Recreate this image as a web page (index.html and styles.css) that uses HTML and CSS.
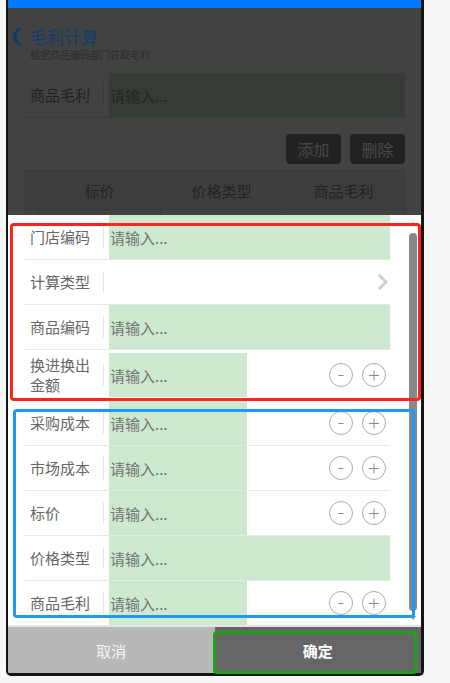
FILE: index.html
```html
<!DOCTYPE html>
<html lang="zh-CN">
<head>
<meta charset="utf-8">
<title>毛利计算</title>
<link rel="stylesheet" href="styles.css">
</head>
<body>
<div class="stage">
  <div class="phone">
    <div class="topbar"></div>
    <div class="page">
      <header class="page-header">
        <svg class="back" width="9" height="17" viewBox="0 0 9 17"><path d="M9 0 C5.5 3 4 5.5 4 8.5 C4 11.5 5.5 14 9 17 L5 17 C1.5 14 0 11.5 0 8.5 C0 5.5 1.5 3 5 0 Z" fill="#0f3b6a"/></svg>
        <div class="titles">
          <h1 class="title">毛利计算</h1>
          <p class="subtitle">根据商品编码部门获取毛利</p>
        </div>
      </header>
      <div class="page-field">
        <span class="page-label">商品毛利</span>
        <span class="page-sep"></span>
        <input class="page-input" placeholder="请输入...">
      </div>
      <div class="page-actions">
        <button class="page-btn">添加</button>
        <button class="page-btn">删除</button>
      </div>
      <div class="grid">
        <div class="grid-row grid-head">
          <div class="cell cell-check"></div>
          <div class="cell">标价</div>
          <div class="cell">价格类型</div>
          <div class="cell">商品毛利</div>
        </div>
        <div class="grid-row grid-body">
          <div class="cell cell-check"></div>
          <div class="cell"></div>
          <div class="cell"></div>
          <div class="cell"></div>
        </div>
      </div>
    </div>

    <div class="sheet">
      <div class="sheet-body">
        <div class="sheet-list">
          <div class="field">
            <span class="field-label">门店编码</span><span class="field-sep"></span>
            <input class="field-input" placeholder="请输入...">
          </div>
          <div class="field">
            <span class="field-label">计算类型</span><span class="field-sep"></span>
            <span class="field-fill"></span>
            <svg class="chev" width="11" height="18" viewBox="0 0 11 18"><polyline points="2,2 9,9 2,16" fill="none" stroke="#cdcdcd" stroke-width="3"/></svg>
          </div>
          <div class="field">
            <span class="field-label">商品编码</span><span class="field-sep"></span>
            <input class="field-input" placeholder="请输入...">
          </div>
          <div class="field field-tall">
            <span class="field-label">换进换出金额</span><span class="field-sep"></span>
            <input class="field-input field-short" placeholder="请输入...">
            <div class="stepper">
              <button class="step"><svg width="24" height="24" viewBox="0 0 24 24"><circle cx="12" cy="12" r="11.5" fill="none" stroke="#ababab"/><line x1="9.5" y1="12.5" x2="14.5" y2="12.5" stroke="#8a8a8a"/></svg></button>
              <button class="step"><svg width="24" height="24" viewBox="0 0 24 24"><circle cx="12" cy="12" r="11.5" fill="none" stroke="#ababab"/><line x1="7" y1="12.5" x2="17" y2="12.5" stroke="#8a8a8a"/><line x1="12" y1="7.5" x2="12" y2="17.5" stroke="#8a8a8a"/></svg></button>
            </div>
          </div>
          <div class="field">
            <span class="field-label">采购成本</span><span class="field-sep"></span>
            <input class="field-input field-short" placeholder="请输入...">
            <div class="stepper">
              <button class="step"><svg width="24" height="24" viewBox="0 0 24 24"><circle cx="12" cy="12" r="11.5" fill="none" stroke="#ababab"/><line x1="9.5" y1="12.5" x2="14.5" y2="12.5" stroke="#8a8a8a"/></svg></button>
              <button class="step"><svg width="24" height="24" viewBox="0 0 24 24"><circle cx="12" cy="12" r="11.5" fill="none" stroke="#ababab"/><line x1="7" y1="12.5" x2="17" y2="12.5" stroke="#8a8a8a"/><line x1="12" y1="7.5" x2="12" y2="17.5" stroke="#8a8a8a"/></svg></button>
            </div>
          </div>
          <div class="field">
            <span class="field-label">市场成本</span><span class="field-sep"></span>
            <input class="field-input field-short" placeholder="请输入...">
            <div class="stepper">
              <button class="step"><svg width="24" height="24" viewBox="0 0 24 24"><circle cx="12" cy="12" r="11.5" fill="none" stroke="#ababab"/><line x1="9.5" y1="12.5" x2="14.5" y2="12.5" stroke="#8a8a8a"/></svg></button>
              <button class="step"><svg width="24" height="24" viewBox="0 0 24 24"><circle cx="12" cy="12" r="11.5" fill="none" stroke="#ababab"/><line x1="7" y1="12.5" x2="17" y2="12.5" stroke="#8a8a8a"/><line x1="12" y1="7.5" x2="12" y2="17.5" stroke="#8a8a8a"/></svg></button>
            </div>
          </div>
          <div class="field">
            <span class="field-label">标价</span><span class="field-sep"></span>
            <input class="field-input field-short" placeholder="请输入...">
            <div class="stepper">
              <button class="step"><svg width="24" height="24" viewBox="0 0 24 24"><circle cx="12" cy="12" r="11.5" fill="none" stroke="#ababab"/><line x1="9.5" y1="12.5" x2="14.5" y2="12.5" stroke="#8a8a8a"/></svg></button>
              <button class="step"><svg width="24" height="24" viewBox="0 0 24 24"><circle cx="12" cy="12" r="11.5" fill="none" stroke="#ababab"/><line x1="7" y1="12.5" x2="17" y2="12.5" stroke="#8a8a8a"/><line x1="12" y1="7.5" x2="12" y2="17.5" stroke="#8a8a8a"/></svg></button>
            </div>
          </div>
          <div class="field">
            <span class="field-label">价格类型</span><span class="field-sep"></span>
            <input class="field-input" placeholder="请输入...">
          </div>
          <div class="field">
            <span class="field-label">商品毛利</span><span class="field-sep"></span>
            <input class="field-input field-short" placeholder="请输入...">
            <div class="stepper">
              <button class="step"><svg width="24" height="24" viewBox="0 0 24 24"><circle cx="12" cy="12" r="11.5" fill="none" stroke="#ababab"/><line x1="9.5" y1="12.5" x2="14.5" y2="12.5" stroke="#8a8a8a"/></svg></button>
              <button class="step"><svg width="24" height="24" viewBox="0 0 24 24"><circle cx="12" cy="12" r="11.5" fill="none" stroke="#ababab"/><line x1="7" y1="12.5" x2="17" y2="12.5" stroke="#8a8a8a"/><line x1="12" y1="7.5" x2="12" y2="17.5" stroke="#8a8a8a"/></svg></button>
            </div>
          </div>
        </div>
        <div class="scrollbar">
          <span class="sb-arrow sb-up"></span>
          <span class="sb-thumb"></span>
          <span class="sb-arrow sb-down"></span>
        </div>
      </div>
      <div class="sheet-actions">
        <button class="sheet-btn btn-cancel">取消</button>
        <button class="sheet-btn btn-ok">确定</button>
      </div>
    </div>
  </div>

  <div class="mark mark-red"></div>
  <div class="mark mark-blue"></div>
  <div class="mark mark-green"></div>
</div>
</body>
</html>
```

FILE: styles.css
```css
* { box-sizing: border-box; }
html, body { margin: 0; padding: 0; }
body {
  background: #f7f7f7;
  font-family: "Noto Sans CJK SC", "Noto Sans", "Liberation Sans", sans-serif;
}
button, input { font-family: inherit; }

.stage { position: relative; width: 450px; height: 683px; }

.phone {
  position: relative;
  margin-left: 6px;
  width: 418px;
  height: 676px;
  border: 2px solid #151515;
  border-top: 0;
  border-right-width: 3px;
  border-bottom-width: 3px;
  border-radius: 0 0 5px 5px;
  background: #424242;
  overflow: hidden;
}

.topbar { height: 8px; background: #007aff; }

/* dimmed page behind the sheet */
.page-header { display: flex; padding: 19px 0 0 5px; }
.back { flex: none; margin-top: 1px; }
.titles { margin-left: 8px; }
.title {
  margin: 0;
  font-size: 17px;
  line-height: 20px;
  font-weight: 400;
  color: #0f3d6e;
}
.subtitle {
  margin: 1px 0 0;
  font-size: 10px;
  line-height: 13px;
  color: #2c2c2c;
}

.page-field {
  display: flex;
  align-items: center;
  height: 45px;
  margin: 12px 16px 0 17px;
  border-bottom: 1px solid #3a3a3a;
}
.page-label {
  width: 78px;
  padding-left: 5px;
  font-size: 15px;
  line-height: 20px;
  color: #222;
}
.page-sep { width: 1px; height: 22px; background: #393939; margin-right: 5px; }
.page-input {
  flex: 1;
  height: 44px;
  border: 0;
  padding: 0 1px;
  background: #353c35;
  font-size: 15px;
  outline: none;
}
.page-input::placeholder { color: #252525; }

.page-actions {
  display: flex;
  justify-content: flex-end;
  gap: 9px;
  margin: 16px 16px 0;
}
.page-btn {
  width: 55px;
  height: 30px;
  border: 0;
  border-radius: 4px;
  background: #222;
  color: #484848;
  font-size: 16px;
  padding: 0;
}

.grid {
  margin: 6px 16px 0 17px;
  border: 1px solid #3a3a3a;
}
.grid-row { display: flex; }
.grid-head { height: 39px; background: #3e3e3e; border-bottom: 1px solid #3a3a3a; }
.grid-body { height: 40px; }
.cell {
  flex: 1;
  display: flex;
  align-items: center;
  justify-content: center;
  border-left: 1px solid #3a3a3a;
  font-size: 15px;
  color: #232323;
}
.cell-check { flex: 0 0 12px; border-left: 0; }

/* bottom sheet */
.sheet {
  position: absolute;
  top: 215px;
  left: 0;
  right: 0;
  bottom: 0;
  display: flex;
  flex-direction: column;
  background: #fff;
}
.sheet-body { flex: 1; min-height: 0; display: flex; }
.sheet-list { flex: 1; min-width: 0; overflow: hidden; }

.scrollbar {
  flex: 0 0 12px;
  display: flex;
  flex-direction: column;
  align-items: flex-start;
  padding: 7px 0 5px;
}
.sb-thumb {
  flex: 1;
  width: 8px;
  margin: 7px 0 5px;
  border-radius: 4px;
  background: #888;
}
.sb-arrow {
  width: 0;
  height: 0;
  margin-left: 1px;
  border-left: 3px solid transparent;
  border-right: 3px solid transparent;
}
.sb-up { border-bottom: 4px solid #8a8a8a; }
.sb-down { border-top: 4px solid #8a8a8a; }

.field {
  display: flex;
  align-items: center;
  min-height: 45px;
  margin: 0 19px 0 17px;
  border-bottom: 1px solid #e8e8e8;
}
.field-tall { padding: 3px 0; }
.field-label {
  flex: none;
  width: 78px;
  padding: 0 8px 0 5px;
  font-size: 15px;
  line-height: 20px;
  color: #666;
}
.field-sep { flex: none; width: 1px; height: 22px; background: #e6e6e6; margin-right: 5px; }
.field-input {
  flex: 1;
  min-width: 0;
  height: 44px;
  border: 0;
  padding: 0 1px;
  background: #cce8cf;
  font-size: 15px;
  color: #333;
  outline: none;
}
.field-input::placeholder { color: #747474; }
.field-short { flex: 0 0 138px; }
.field-fill { flex: 1; height: 44px; }
.chev { flex: none; margin-right: 2px; }

.stepper { display: flex; gap: 9px; margin-left: auto; margin-right: 4px; }
.step {
  width: 24px;
  height: 24px;
  padding: 0;
  border: 0;
  background: none;
  display: block;
}
.step svg { display: block; }

.sheet-actions {
  flex: none;
  display: flex;
  height: 48px;
  border-top: 2px solid #e4e4e4;
}
.sheet-btn {
  flex: 1;
  border: 0;
  font-size: 15px;
  padding: 0;
}
.btn-cancel { background: #b8b8b8; color: #f4f4f4; }
.btn-ok { background: #666; color: #fff; font-weight: 600; }

/* annotation outlines */
.mark {
  position: absolute;
  border: 3px solid;
  border-radius: 4px;
  pointer-events: none;
}
.mark-red { left: 10px; top: 223px; width: 411px; height: 178px; border-color: #f8261c; }
.mark-blue { left: 13px; top: 409px; width: 402px; height: 209px; border-color: #1f98fb; }
.mark-green { left: 213px; top: 631px; width: 204px; height: 43px; border-color: #1e9f1e; }
```
